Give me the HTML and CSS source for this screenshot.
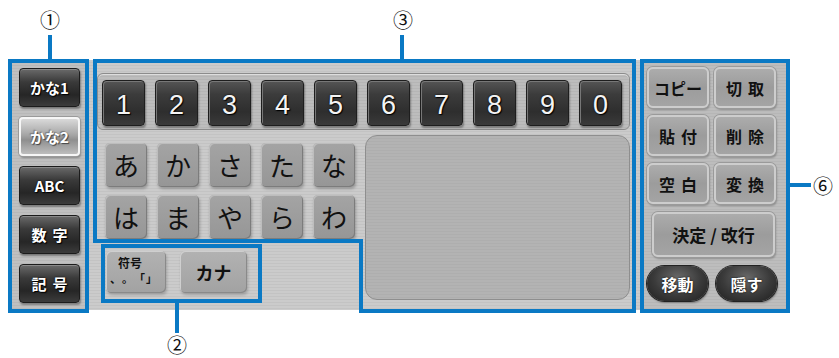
FILE: index.html
```html
<!DOCTYPE html>
<html lang="ja">
<head>
<meta charset="utf-8">
<title>Keyboard</title>
<link rel="stylesheet" href="styles.css">
</head>
<body>
<div class="stage">
  <div class="device">
    <div class="modes">
      <div class="mode">かな1</div>
      <div class="mode active">かな2</div>
      <div class="mode">ABC</div>
      <div class="mode spaced">数字</div>
      <div class="mode spaced">記号</div>
    </div>
    <div class="center">
      <div class="numrow">
        <div class="num">1</div><div class="num">2</div><div class="num">3</div><div class="num">4</div><div class="num">5</div>
        <div class="num">6</div><div class="num">7</div><div class="num">8</div><div class="num">9</div><div class="num">0</div>
      </div>
      <div class="lower">
        <div class="kana-area">
          <div class="kana-grid">
            <div class="kana">あ</div><div class="kana">か</div><div class="kana">さ</div><div class="kana">た</div><div class="kana">な</div>
            <div class="kana">は</div><div class="kana">ま</div><div class="kana">や</div><div class="kana">ら</div><div class="kana">わ</div>
          </div>
          <div class="extras">
            <div class="ext sym"><span class="sym-top">符号</span><span class="sym-bot">、。「」</span></div>
            <div class="ext kata">カナ</div>
          </div>
        </div>
        <div class="display"></div>
      </div>
    </div>
    <div class="edit">
      <div class="edit-grid">
        <div class="eb">コピー</div><div class="eb spaced">切取</div>
        <div class="eb spaced">貼付</div><div class="eb spaced">削除</div>
        <div class="eb spaced">空白</div><div class="eb spaced">変換</div>
      </div>
      <div class="eb enter">決定 / 改行</div>
      <div class="pills">
        <div class="pill">移動</div><div class="pill">隠す</div>
      </div>
    </div>
  </div>

  <svg class="marks" width="839" height="358" viewBox="0 0 839 358">
    <g fill="none" stroke="#0a79c4" stroke-width="4">
      <rect x="10" y="61" width="77" height="250"/>
      <polygon points="95,61 634,61 634,311 361,311 361,241 95,241"/>
      <rect x="103" y="246" width="157" height="55"/>
      <rect x="642" y="61" width="146" height="250"/>
      <line x1="50" y1="35" x2="50" y2="61"/>
      <line x1="402" y1="35" x2="402" y2="61"/>
      <line x1="177" y1="301" x2="177" y2="333"/>
      <line x1="788" y1="185" x2="811" y2="185"/>
    </g>
  </svg>
  <span class="label l1">①</span>
  <span class="label l2">②</span>
  <span class="label l3">③</span>
  <span class="label l6">⑥</span>
</div>
</body>
</html>
```

FILE: styles.css
```css
html, body {
  margin: 0;
  padding: 0;
  background: #ffffff;
}

.stage {
  position: relative;
  width: 839px;
  height: 358px;
  overflow: hidden;
  font-family: "Noto Sans CJK JP", "Noto Sans", sans-serif;
}

.device {
  margin: 60px 0 0 10px;
  width: 776px;
  height: 250px;
  display: flex;
  background: repeating-linear-gradient(180deg, #cbcbcb 0 2px, #c3c3c3 2px 3px);
}

/* left mode column */
.modes {
  width: 76px;
  box-sizing: border-box;
  padding: 8px 0 0 9px;
  display: flex;
  flex-direction: column;
  gap: 10px;
  background: repeating-linear-gradient(180deg, #c0c0c0 0 2px, #b8b8b8 2px 3px);
}

.mode {
  width: 61px;
  height: 39px;
  box-sizing: border-box;
  border: 1px solid #1c1c1c;
  border-radius: 4px;
  background: linear-gradient(180deg, #6a6a6a 0%, #3a3a3a 35%, #262626 70%, #3c3c3c 100%);
  box-shadow: inset 0 1px 0 #8a8a8a, 1px 2px 2px rgba(0, 0, 0, 0.35);
  color: #ffffff;
  font-weight: 700;
  font-size: 15px;
  display: flex;
  align-items: center;
  justify-content: center;
  text-shadow: 0 0 2px #000, 1px 1px 1px #000;
}

.mode.spaced {
  letter-spacing: 6px;
  padding-left: 6px;
}

.mode.active {
  border: 2px solid #f6f6f6;
  background: linear-gradient(180deg, #d9d9d9 0%, #a6a6a6 45%, #8f8f8f 60%, #bdbdbd 100%);
  box-shadow: 0 0 0 1px #9a9a9a, 1px 2px 2px rgba(0, 0, 0, 0.3);
  color: #ffffff;
  text-shadow: 1px 1px 1px #444, -1px -1px 1px #777;
}

/* center */
.center {
  margin-left: 11px;
  width: 533px;
  display: flex;
  flex-direction: column;
}

.numrow {
  margin-top: 13px;
  height: 57px;
  box-sizing: border-box;
  padding: 6px 0 0 4px;
  display: flex;
  gap: 10px;
  border: 1px solid #8c8c8c;
  border-radius: 6px;
  background: repeating-linear-gradient(180deg, #bdbdbd 0 2px, #b5b5b5 2px 3px);
  box-shadow: inset 0 1px 0 #dedede;
}

.num {
  width: 43px;
  height: 46px;
  box-sizing: border-box;
  border: 1px solid #1e1e1e;
  border-radius: 4px;
  background: linear-gradient(180deg, #555 0%, #3c3c3c 30%, #2e2e2e 70%, #3a3a3a 100%);
  box-shadow: inset 1px 1px 0 #777, 1px 2px 2px rgba(0, 0, 0, 0.35);
  color: #f4f4f4;
  font-family: "Liberation Sans", Arial, sans-serif;
  font-size: 27px;
  display: flex;
  align-items: center;
  justify-content: center;
  padding-top: 4px;
  text-shadow: 0 0 2px #000, 1px 1px 1px #000;
}

.lower {
  margin-top: 5px;
  display: flex;
}

.kana-area {
  width: 268px;
}

.kana-grid {
  padding: 8px 0 0 8px;
  display: grid;
  grid-template-columns: repeat(5, 42px);
  grid-template-rows: 44px 44px;
  column-gap: 10px;
  row-gap: 8px;
}

.kana {
  border-radius: 5px;
  background: linear-gradient(180deg, #a4a4a4, #969696);
  box-shadow: inset 1px 1px 0 #bdbdbd, inset -1px -1px 0 #7c7c7c, 1px 2px 3px rgba(0, 0, 0, 0.25);
  color: #111111;
  font-size: 26px;
  display: flex;
  align-items: center;
  justify-content: center;
  line-height: 1;
}

.extras {
  margin-top: 12px;
  padding-left: 9px;
  display: flex;
  gap: 14px;
}

.ext {
  height: 42px;
  border-radius: 5px;
  background: linear-gradient(180deg, #b2b2b2, #a2a2a2);
  box-shadow: inset 1px 1px 0 #cfcfcf, inset -1px -1px 0 #8a8a8a, 1px 2px 3px rgba(0, 0, 0, 0.2);
  color: #111111;
  display: flex;
  align-items: center;
  justify-content: center;
}

.ext.sym {
  width: 60px;
  box-sizing: border-box;
  padding: 4px 0 0 4px;
  flex-direction: column;
  align-items: flex-start;
  justify-content: flex-start;
}

.sym-top {
  display: block;
  font-size: 12px;
  font-weight: 700;
  line-height: 15px;
  padding-left: 8px;
  white-space: nowrap;
}

.sym-bot {
  display: block;
  font-size: 11px;
  font-weight: 700;
  line-height: 16px;
  white-space: nowrap;
  text-spacing-trim: space-all;
  font-feature-settings: "fwid" 1;
  letter-spacing: 1px;
}

.ext.kata {
  width: 67px;
  font-size: 18px;
  font-weight: 700;
}

.display {
  width: 265px;
  height: 165px;
  box-sizing: border-box;
  border: 1px solid #8e8e8e;
  border-radius: 12px;
  background: repeating-linear-gradient(180deg, #b3b3b3 0 2px, #aeaeae 2px 3px);
}

/* right edit column */
.edit {
  margin-left: 12px;
  width: 144px;
  box-sizing: border-box;
  padding: 7px 0 0 5px;
  background: repeating-linear-gradient(180deg, #bdbdbd 0 2px, #b6b6b6 2px 3px);
}

.edit-grid {
  display: grid;
  grid-template-columns: 62px 62px;
  grid-template-rows: repeat(3, 41px);
  column-gap: 5px;
  row-gap: 7px;
}

.eb {
  box-sizing: border-box;
  border: 2px solid #cdcdcd;
  border-radius: 6px;
  background: linear-gradient(180deg, #acacac 0%, #9c9c9c 50%, #a4a4a4 100%);
  box-shadow: 0 0 0 1px #9a9a9a, 1px 2px 2px rgba(0, 0, 0, 0.25);
  color: #111111;
  font-size: 16px;
  font-weight: 700;
  display: flex;
  align-items: center;
  justify-content: center;
}

.eb.spaced {
  letter-spacing: 6px;
  padding-left: 6px;
}

.eb.enter {
  margin: 8px 0 0 5px;
  width: 123px;
  height: 45px;
  font-size: 17px;
}

.pills {
  margin-top: 9px;
  display: flex;
  gap: 8px;
}

.pill {
  width: 61px;
  height: 35px;
  border-radius: 18px;
  background: radial-gradient(ellipse at 50% 35%, #6a6a6a 0%, #3a3a3a 55%, #1e1e1e 100%);
  box-shadow: 0 0 0 1px #222, 1px 2px 2px rgba(0, 0, 0, 0.35);
  color: #ffffff;
  font-size: 16px;
  font-weight: 700;
  display: flex;
  align-items: center;
  justify-content: center;
  text-shadow: 0 0 2px #000;
}

/* annotation overlay */
.marks {
  position: absolute;
  left: 0;
  top: 0;
  pointer-events: none;
}

.label {
  position: absolute;
  width: 30px;
  margin-left: -15px;
  text-align: center;
  font-family: "Noto Sans CJK JP", "DejaVu Sans", sans-serif;
  font-size: 20px;
  line-height: 20px;
  color: #111111;
}

.l1 { left: 50px; top: 10px; }
.l2 { left: 177px; top: 335px; }
.l3 { left: 403px; top: 10px; }
.l6 { left: 823px; top: 176px; }
```
